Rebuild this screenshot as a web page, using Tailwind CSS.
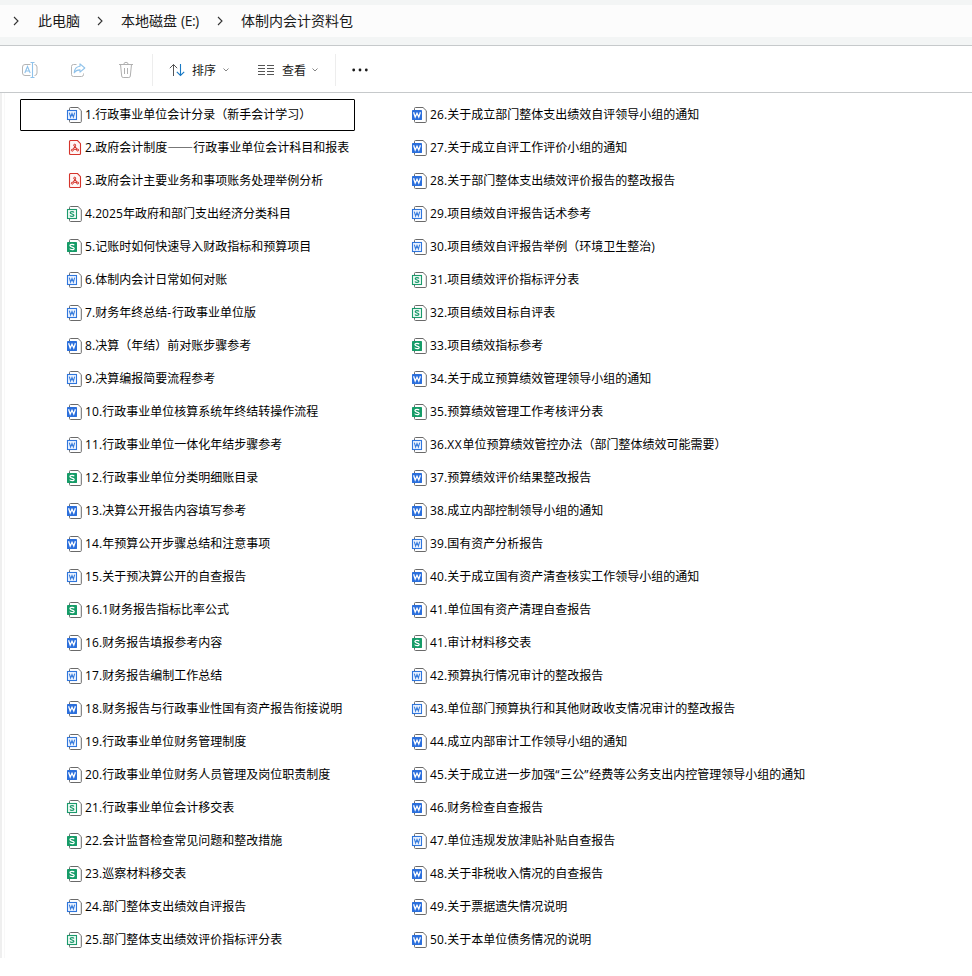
<!DOCTYPE html>
<html lang="zh-CN">
<head>
<meta charset="utf-8">
<title>体制内会计资料包</title>
<script src="https://cdn.jsdelivr.net/npm/@tailwindcss/browser@4"></script>
</head>
<body class="w-[972px] h-[976px] overflow-hidden bg-white text-black flex flex-col font-['Open_Sans','Noto_Sans_CJK_SC',sans-serif]">
<svg class="hidden">
  <symbol id="page" viewBox="0 0 16 16"><path d="M3.500 3V1.500a1 1 0 0 1 1-1H12l3.300 3.200v10.800a1 1 0 0 1-1 1H4.500a1 1 0 0 1-1-1V13" fill="#fff" stroke="#6a6a6a"/></symbol>
  <symbol id="w" viewBox="0 0 16 16"><use href="#page"/><rect x="1" y="3" width="10" height="10" rx=".4" fill="#2b6fdc"/><path d="M2.600 5.300 4.200 10.100 6 6.200 7.800 10.100 9.400 5.300" fill="none" stroke="#fff" stroke-width="1.300"/></symbol>
  <symbol id="wo" viewBox="0 0 16 16"><use href="#page"/><rect x="1.500" y="3.500" width="9" height="9" fill="#eef5ff" stroke="#2f76dc" stroke-width="1.100"/><path d="M3.300 5.600 4.600 10 6 6.500 7.400 10 8.700 5.600" fill="none" stroke="#3c7fdd" stroke-width="1.100"/></symbol>
  <symbol id="s" viewBox="0 0 16 16"><use href="#page"/><rect x="1" y="3" width="10" height="10" rx=".4" fill="#169c68"/><path d="M8.200 6.300C7.700 5 3.900 4.900 3.900 6.600S8.200 7.800 8.200 9.500 4.200 11 3.700 9.600" fill="none" stroke="#fff" stroke-width="1.200"/></symbol>
  <symbol id="so" viewBox="0 0 16 16"><use href="#page"/><rect x="1.500" y="3.500" width="9" height="9" fill="#effaf5" stroke="#1b9a6c" stroke-width="1.100"/><path d="M7.900 6.500C7.400 5.300 4.200 5.300 4.200 6.700S7.900 7.900 7.900 9.300 4.500 10.700 4 9.500" fill="none" stroke="#1b9a6c" stroke-width="1.200"/></symbol>
  <symbol id="p" viewBox="0 0 16 16"><path d="M4.500.5H11.500l3 3.200V13.500a1 1 0 0 1-1 1h-9a1 1 0 0 1-1-1v-12a1 1 0 0 1 1-1Z" fill="#fff5f4" stroke="#d5342b" stroke-width="1.100"/><path d="M9 6.300 7.300 9.300M9 6.300l1.900 3.200M7.300 9.300l3.600.2" fill="none" stroke="#d5342b" stroke-width="1.100"/><g fill="none" stroke="#d5342b"><circle cx="8.700" cy="5.200" r="1"/><circle cx="6.300" cy="10.200" r="1"/><circle cx="11.600" cy="10" r="1"/></g></symbol>
  <symbol id="chev" viewBox="0 0 6 10"><path d="M1 1 5 5 1 9" fill="none" stroke="#333" stroke-width="1.100"/></symbol>
  <symbol id="down" viewBox="0 0 6 4"><path d="M.5.5 3 3 5.500.5" fill="none" stroke="#777" stroke-width=".9"/></symbol>
</svg>

<header class="h-[46px] shrink-0 bg-[#f3f5f5] border-b border-[#c6c9cb] pt-[5px]">
  <nav class="h-8 bg-[#fcfcfc] flex items-center text-sm leading-8 text-[#1a1a1a] whitespace-nowrap">
    <svg class="w-[6px] h-[10px] ml-[13px]"><use href="#chev"/></svg>
    <span class="ml-[19px] w-[42px]">此电脑</span>
    <svg class="w-[6px] h-[10px] ml-[17px]"><use href="#chev"/></svg>
    <span class="ml-[18px] w-[78px]">本地磁盘<span class="ml-1 tracking-[-0.5px]">(E:)</span></span>
    <svg class="w-[6px] h-[10px] ml-[18px]"><use href="#chev"/></svg>
    <span class="ml-[18px]">体制内会计资料包</span>
  </nav>
</header>

<div class="h-[47px] shrink-0 bg-white border-b border-[#c6c9cb] pt-[2px] flex items-center text-xs text-[#1a1a1a]">
  <svg class="w-[18px] h-[18px] ml-[21px]" viewBox="0 0 18 18" fill="none"><path d="M9.500 3.500H4a2.500 2.500 0 0 0-2.500 2.500v6A2.500 2.500 0 0 0 4 14.500h5.500M13.500 3.500a2.500 2.500 0 0 1 2.500 2.500v6a2.500 2.500 0 0 1-2.500 2.500" stroke="#b5b5b5"/><path d="M3.800 12 6.500 5.500 9.200 12M4.800 10h3.500M11.500 1.500v15M9.500 1.500h4M9.500 16.500h4" stroke="#8fc2ea" stroke-width="1.100"/></svg>
  <svg class="w-4 h-4 ml-[31px]" viewBox="0 0 16 16" fill="none"><path d="M6.500 2.500H3.500a2 2 0 0 0-2 2v8a2 2 0 0 0 2 2h8a2 2 0 0 0 2-2v-1" stroke="#b5b5b5"/><path d="M10 1.800 14.800 6 10 10.200V7.900C7 7.900 5.300 9 4.200 10.800 4.500 7 6.500 4.500 10 4.200Z" stroke="#8fc2ea" stroke-width="1.100" stroke-linejoin="round"/></svg>
  <svg class="w-4 h-[18px] ml-8" viewBox="0 0 16 18" fill="none" stroke="#b0b0b0"><path d="M1 3.500h14M5.800 3.500a2.200 2.200 0 0 1 4.400 0M2.500 3.500l1.200 11.600a1.500 1.500 0 0 0 1.500 1.400h5.600a1.500 1.500 0 0 0 1.500-1.400L13.500 3.500M6.500 7v6M9.500 7v6"/></svg>
  <div class="w-px h-8 bg-[#ededed] ml-[18px]"></div>
  <svg class="w-4 h-[14px] ml-4" viewBox="0 0 16 14" fill="none"><path d="M4.500 13V1.500M.8 5.200 4.500 1.500 8.200 5.200" stroke="#555"/><path d="M11.500 1v11.500M7.800 8.800l3.700 3.700 3.700-3.700" stroke="#1879c4" stroke-width="1.100"/></svg>
  <span class="ml-[7px] w-6 pt-px">排序</span>
  <svg class="w-[6px] h-1 ml-[7px]"><use href="#down"/></svg>
  <svg class="w-4 h-[10px] ml-[29px]" viewBox="0 0 16 10" stroke="#555"><path d="M0 .5h7M9 .5h7M0 3.500h7M9 3.500h7M0 6.500h7M9 6.500h7M0 9.500h7M9 9.500h7"/></svg>
  <span class="ml-2 w-6 pt-px">查看</span>
  <svg class="w-[6px] h-1 ml-[6px]"><use href="#down"/></svg>
  <div class="w-px h-8 bg-[#ededed] ml-[17px]"></div>
  <svg class="w-4 h-1 ml-4" viewBox="0 0 16 4" fill="#1a1a1a"><circle cx="1.700" cy="2" r="1.400"/><circle cx="8" cy="2" r="1.400"/><circle cx="14.300" cy="2" r="1.400"/></svg>
</div>

<main class="flex-1 flex min-h-0">
  <div class="w-[5px] mr-[15px] h-[865px] border-l-2 border-l-[#efefef] border-r border-r-[#f8f8f8]"></div>
  <ul id="left" class="w-[335px] pt-[6px] mr-[10px]"></ul>
  <ul id="right" class="pt-[6px]"></ul>
</main>

<script>
const left = `wo|1.行政事业单位会计分录（新手会计学习）
p|2.政府会计制度——行政事业单位会计科目和报表
p|3.政府会计主要业务和事项账务处理举例分析
so|4.2025年政府和部门支出经济分类科目
s|5.记账时如何快速导入财政指标和预算项目
wo|6.体制内会计日常如何对账
wo|7.财务年终总结-行政事业单位版
w|8.决算（年结）前对账步骤参考
wo|9.决算编报简要流程参考
w|10.行政事业单位核算系统年终结转操作流程
wo|11.行政事业单位一体化年结步骤参考
s|12.行政事业单位分类明细账目录
w|13.决算公开报告内容填写参考
w|14.年预算公开步骤总结和注意事项
wo|15.关于预决算公开的自查报告
s|16.1财务报告指标比率公式
w|16.财务报告填报参考内容
wo|17.财务报告编制工作总结
w|18.财务报告与行政事业性国有资产报告衔接说明
wo|19.行政事业单位财务管理制度
w|20.行政事业单位财务人员管理及岗位职责制度
so|21.行政事业单位会计移交表
s|22.会计监督检查常见问题和整改措施
s|23.巡察材料移交表
wo|24.部门整体支出绩效自评报告
so|25.部门整体支出绩效评价指标评分表`;
const right = `w|26.关于成立部门整体支出绩效自评领导小组的通知
w|27.关于成立自评工作评价小组的通知
w|28.关于部门整体支出绩效评价报告的整改报告
wo|29.项目绩效自评报告话术参考
wo|30.项目绩效自评报告举例（环境卫生整治)
so|31.项目绩效评价指标评分表
so|32.项目绩效目标自评表
s|33.项目绩效指标参考
w|34.关于成立预算绩效管理领导小组的通知
s|35.预算绩效管理工作考核评分表
wo|36.XX单位预算绩效管控办法（部门整体绩效可能需要）
w|37.预算绩效评价结果整改报告
w|38.成立内部控制领导小组的通知
wo|39.国有资产分析报告
w|40.关于成立国有资产清查核实工作领导小组的通知
w|41.单位国有资产清理自查报告
s|41.审计材料移交表
wo|42.预算执行情况审计的整改报告
wo|43.单位部门预算执行和其他财政收支情况审计的整改报告
w|44.成立内部审计工作领导小组的通知
w|45.关于成立进一步加强“三公”经费等公务支出内控管理领导小组的通知
w|46.财务检查自查报告
wo|47.单位违规发放津贴补贴自查报告
w|48.关于非税收入情况的自查报告
w|49.关于票据遗失情况说明
w|50.关于本单位债务情况的说明`;
// Latin runs and dashes take their own tracking beside the 12px ideographs.
const format = t => t
  .replace(/[0-9.)]+|X+|[-“”]|—+/g, m =>
    m[0] === '—' ? `<span class="font-['Noto_Sans_CJK_SC'] text-[13px] leading-none">${m}</span>` :
    /[-“”X]/.test(m) ? `<span class="tracking-[0.8px]">${m}</span>` :
    `<span class="tracking-[0.08px]">${m}</span>`);
const fill = (id, data) => {
  document.getElementById(id).innerHTML = data.split('\n').map((line, i) => {
    const [icon, name] = line.split('|');
    const frame = id === 'left' && i === 0 ? 'border border-black rounded-[1px]' : 'border border-transparent';
    return `<li class="h-8 mb-px flex items-center pl-[45px] text-xs leading-[18px] whitespace-nowrap ${frame}"><svg class="w-4 h-4 mr-[3px] shrink-0"><use href="#${icon}"/></svg><span>${format(name)}</span></li>`;
  }).join('');
};
fill('left', left);
fill('right', right);
</script>
</body>
</html>
